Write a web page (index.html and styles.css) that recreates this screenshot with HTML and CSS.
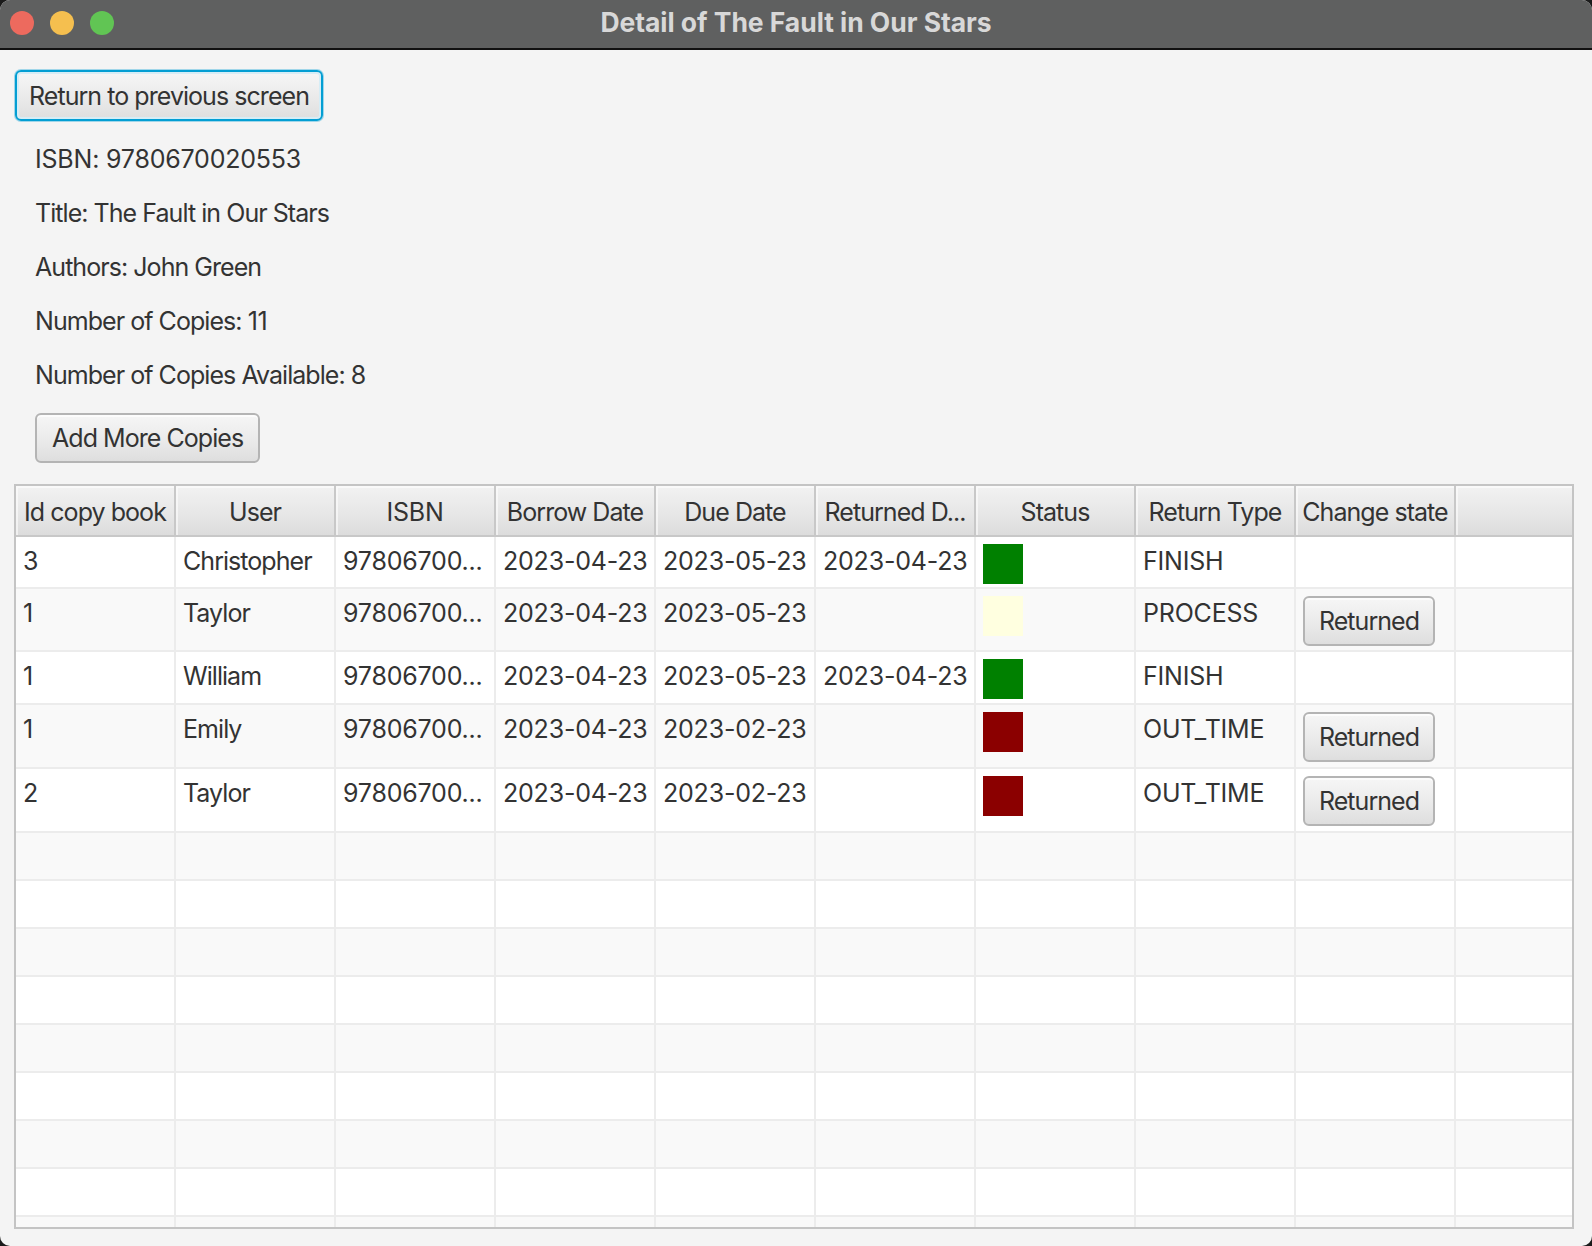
FILE: index.html
```html
<!DOCTYPE html>
<html lang="en">
<head>
<meta charset="utf-8">
<title>Detail of The Fault in Our Stars</title>
<link rel="stylesheet" href="styles.css">
</head>
<body>
<div class="window">
  <div class="titlebar">
    <div class="lights">
      <span class="light red"></span>
      <span class="light yellow"></span>
      <span class="light green"></span>
    </div>
    <div class="title">Detail of The Fault in Our Stars</div>
    <div class="spacer"></div>
  </div>
  <div class="content">
    <div class="top-row">
      <button class="btn btn-focused">Return to previous screen</button>
    </div>
    <div class="info">
      <div class="label"><span class="num">ISBN: 9780670020553</span></div>
      <div class="label">Title: The Fault in Our Stars</div>
      <div class="label">Authors: John Green</div>
      <div class="label">Number of Copies: <span class="num">11</span></div>
      <div class="label">Number of Copies Available: <span class="num">8</span></div>
      <div class="top-row"><button class="btn">Add More Copies</button></div>
    </div>
    <div class="table">
      <div class="thead">
        <div class="th">Id copy book</div>
        <div class="th">User</div>
        <div class="th num">ISBN</div>
        <div class="th">Borrow Date</div>
        <div class="th">Due Date</div>
        <div class="th">Returned D...</div>
        <div class="th">Status</div>
        <div class="th">Return Type</div>
        <div class="th">Change state</div>
        <div class="th th-fill"></div>
      </div>
      <div class="tbody">
        <div class="tr h52">
          <div class="td num">3</div><div class="td">Christopher</div><div class="td num">97806700...</div>
          <div class="td num">2023-04-23</div><div class="td num">2023-05-23</div><div class="td num">2023-04-23</div>
          <div class="td td-status"><span class="sq sq-green"></span></div>
          <div class="td num">FINISH</div><div class="td"></div><div class="td td-fill"></div>
        </div>
        <div class="tr alt h63">
          <div class="td num">1</div><div class="td">Taylor</div><div class="td num">97806700...</div>
          <div class="td num">2023-04-23</div><div class="td num">2023-05-23</div><div class="td"></div>
          <div class="td td-status"><span class="sq sq-yellow"></span></div>
          <div class="td num">PROCESS</div>
          <div class="td td-btn"><button class="btn btn-small">Returned</button></div>
          <div class="td td-fill"></div>
        </div>
        <div class="tr h53">
          <div class="td num">1</div><div class="td">William</div><div class="td num">97806700...</div>
          <div class="td num">2023-04-23</div><div class="td num">2023-05-23</div><div class="td num">2023-04-23</div>
          <div class="td td-status"><span class="sq sq-green"></span></div>
          <div class="td num">FINISH</div><div class="td"></div><div class="td td-fill"></div>
        </div>
        <div class="tr alt h64">
          <div class="td num">1</div><div class="td">Emily</div><div class="td num">97806700...</div>
          <div class="td num">2023-04-23</div><div class="td num">2023-02-23</div><div class="td"></div>
          <div class="td td-status"><span class="sq sq-red"></span></div>
          <div class="td num">OUT_TIME</div>
          <div class="td td-btn"><button class="btn btn-small">Returned</button></div>
          <div class="td td-fill"></div>
        </div>
        <div class="tr h64">
          <div class="td num">2</div><div class="td">Taylor</div><div class="td num">97806700...</div>
          <div class="td num">2023-04-23</div><div class="td num">2023-02-23</div><div class="td"></div>
          <div class="td td-status"><span class="sq sq-red"></span></div>
          <div class="td num">OUT_TIME</div>
          <div class="td td-btn"><button class="btn btn-small">Returned</button></div>
          <div class="td td-fill"></div>
        </div>
        <div class="tr alt empty"><div class="td"></div><div class="td"></div><div class="td"></div><div class="td"></div><div class="td"></div><div class="td"></div><div class="td"></div><div class="td"></div><div class="td"></div><div class="td td-fill"></div></div>
        <div class="tr empty"><div class="td"></div><div class="td"></div><div class="td"></div><div class="td"></div><div class="td"></div><div class="td"></div><div class="td"></div><div class="td"></div><div class="td"></div><div class="td td-fill"></div></div>
        <div class="tr alt empty"><div class="td"></div><div class="td"></div><div class="td"></div><div class="td"></div><div class="td"></div><div class="td"></div><div class="td"></div><div class="td"></div><div class="td"></div><div class="td td-fill"></div></div>
        <div class="tr empty"><div class="td"></div><div class="td"></div><div class="td"></div><div class="td"></div><div class="td"></div><div class="td"></div><div class="td"></div><div class="td"></div><div class="td"></div><div class="td td-fill"></div></div>
        <div class="tr alt empty"><div class="td"></div><div class="td"></div><div class="td"></div><div class="td"></div><div class="td"></div><div class="td"></div><div class="td"></div><div class="td"></div><div class="td"></div><div class="td td-fill"></div></div>
        <div class="tr empty"><div class="td"></div><div class="td"></div><div class="td"></div><div class="td"></div><div class="td"></div><div class="td"></div><div class="td"></div><div class="td"></div><div class="td"></div><div class="td td-fill"></div></div>
        <div class="tr alt empty"><div class="td"></div><div class="td"></div><div class="td"></div><div class="td"></div><div class="td"></div><div class="td"></div><div class="td"></div><div class="td"></div><div class="td"></div><div class="td td-fill"></div></div>
        <div class="tr empty"><div class="td"></div><div class="td"></div><div class="td"></div><div class="td"></div><div class="td"></div><div class="td"></div><div class="td"></div><div class="td"></div><div class="td"></div><div class="td td-fill"></div></div>
        <div class="tr alt empty"><div class="td"></div><div class="td"></div><div class="td"></div><div class="td"></div><div class="td"></div><div class="td"></div><div class="td"></div><div class="td"></div><div class="td"></div><div class="td td-fill"></div></div>
      </div>
    </div>
  </div>
</div>
</body>
</html>
```

FILE: styles.css
```css
* { box-sizing: border-box; }
html, body { margin: 0; padding: 0; }
body {
  background: #1b1b1b;
  width: 1592px;
  height: 1246px;
  overflow: hidden;
  font-family: Inter, "Noto Sans", sans-serif;
}
.window {
  width: 1592px;
  height: 1246px;
  background: #f4f4f4;
  border-radius: 10px;
  overflow: hidden;
  display: flex;
  flex-direction: column;
}
.titlebar {
  height: 50px;
  flex: none;
  background: #5f6060;
  border-bottom: 2px solid #111;
  display: grid;
  grid-template-columns: 1fr auto 1fr;
  align-items: center;
}
.lights {
  display: flex;
  gap: 16px;
  padding-left: 10px;
  padding-bottom: 2px;
}
.light {
  width: 24px;
  height: 24px;
  border-radius: 50%;
  display: block;
}
.red { background: #ed6a5e; }
.yellow { background: #f5bf4f; }
.green { background: #61c554; }
.title {
  color: #d8d8d8;
  font-weight: 700;
  font-size: 26.5px;
  letter-spacing: -0.05px;
  padding-bottom: 4px;
}
.content {
  flex: 1;
  display: flex;
  flex-direction: column;
  padding: 20px 18px 0 15px;
  color: #333;
  font-size: 25px;
  letter-spacing: -0.95px;
}
.num { letter-spacing: -0.2px; }
.top-row { display: flex; }
.btn {
  font-family: Inter, "Noto Sans", sans-serif;
  font-size: 25px;
  color: #333;
  height: 50px;
  padding: 0 15px;
  white-space: nowrap;
  border: 2px solid #b4b4b4;
  border-radius: 6px;
  background: linear-gradient(to bottom, #f6f6f6 0%, #e9e9e9 60%, #dedede 100%);
  box-shadow: inset 0 2px 0 rgba(255,255,255,0.7);
  letter-spacing: -0.95px;
}
.btn-focused {
  height: 51px;
  width: 308px;
  padding: 0;
  border-color: #039ed3;
  box-shadow: 0 0 0 1px rgba(3,158,211,0.35), inset 0 0 0 2px #d6edf6;
}
.info {
  display: flex;
  flex-direction: column;
  gap: 22px;
  margin-top: 22px;
  padding-left: 20px;
}
.label {
  line-height: 32px;
}
.table {
  margin-top: 21px;
  margin-left: -1px;
  height: 745px;
  border: 2px solid #c4c4c4;
  display: flex;
  flex-direction: column;
  overflow: hidden;
  background: #fff;
}
.thead, .tr {
  display: grid;
  grid-template-columns: repeat(9, 160px) 1fr;
  flex: none;
}
.thead { height: 51px; border-bottom: 2px solid #c8c8c8; }
.th {
  display: flex;
  align-items: center;
  justify-content: center;
  white-space: nowrap;
  background: linear-gradient(to bottom, #f2f2f2 0%, #e6e6e6 60%, #dcdcdc 100%);
  border-right: 2px solid #c8c8c8;
  box-shadow: inset 2px 2px 0 rgba(255,255,255,0.55);
  padding-top: 3px;
}
.th-fill { border-right: none; }
.tbody { flex: 1; overflow: hidden; display: flex; flex-direction: column; }
.tr { border-bottom: 2px solid #ececec; background: #fff; }
.tr.alt { background: #f9f9f9; }
.h52 { height: 52px; }
.h53 { height: 53px; }
.h63 { height: 63px; }
.h64 { height: 64px; }
.empty { height: 48px; }
.td {
  border-right: 2px solid #ececec;
  padding: 8px 0 0 7px;
  line-height: 32px;
  white-space: nowrap;
  overflow: hidden;
}
.td-fill { border-right: none; }
.td-status { padding: 7px 0 0 7px; }
.sq { display: block; width: 40px; height: 40px; }
.sq-green { background: #008000; }
.sq-yellow { background: #ffffe0; }
.sq-red { background: #8b0000; }
.td-btn { padding: 7px 0 0 7px; }
.btn-small { width: 132px; padding: 0; }
```
